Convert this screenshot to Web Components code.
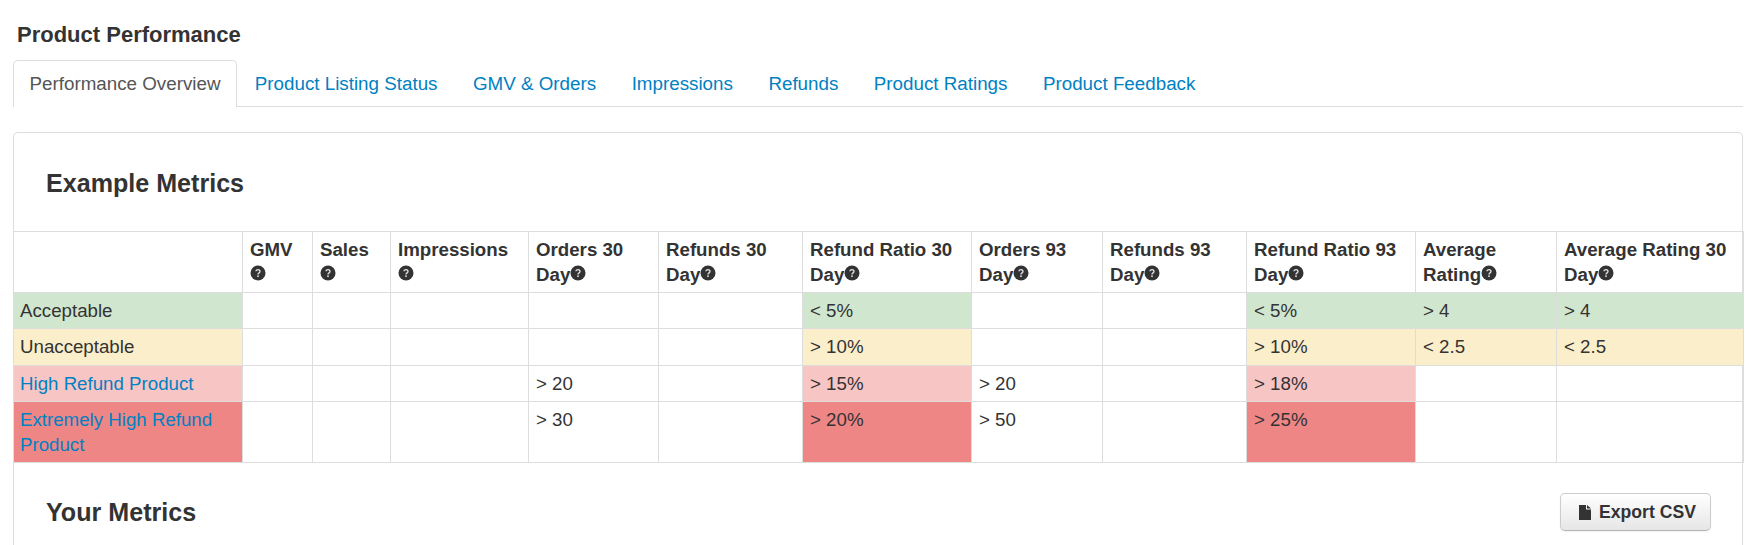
<!DOCTYPE html>
<html>
<head>
<meta charset="utf-8">
<title>Product Performance</title>
<style>
  html, body { margin: 0; background: #fff; }
  body { font-family: "Liberation Sans", Arial, sans-serif; font-size: 18.7px; color: #333; overflow: hidden; height: 545px; }
</style>
</head>
<body>
<performance-page>
  <page-tabs>
    <page-tab active>Performance Overview</page-tab>
    <page-tab>Product Listing Status</page-tab>
    <page-tab>GMV &amp; Orders</page-tab>
    <page-tab>Impressions</page-tab>
    <page-tab>Refunds</page-tab>
    <page-tab>Product Ratings</page-tab>
    <page-tab>Product Feedback</page-tab>
  </page-tabs>
  <metrics-panel>
    <section-head>Example Metrics</section-head>
    <metrics-table></metrics-table>
    <section-head compact>Your Metrics<export-button slot="action">Export CSV</export-button></section-head>
  </metrics-panel>
</performance-page>

<script>
class PerformancePage extends HTMLElement {
  connectedCallback() {
    this.attachShadow({ mode: 'open' });
    this.shadowRoot.innerHTML = `
      <style>
        :host { display: block; padding: 0 13px 0 13px; }
        h1 { margin: 0; padding: 23px 0 0 4px; height: 37px; font-size: 22px; line-height: 24px; font-weight: bold; color: #333; }
      </style>
      <h1>Product Performance</h1>
      <slot></slot>
    `;
  }
}

class PageTabs extends HTMLElement {
  connectedCallback() {
    this.attachShadow({ mode: 'open' });
    this.shadowRoot.innerHTML = `
      <style>
        :host { display: flex; height: 46px; border-bottom: 1px solid #ddd; margin-bottom: 25px; box-sizing: content-box; }
      </style>
      <slot></slot>
    `;
  }
}

class PageTab extends HTMLElement {
  connectedCallback() {
    this.attachShadow({ mode: 'open' });
    this.shadowRoot.innerHTML = `
      <style>
        :host { display: block; height: 47px; box-sizing: border-box; padding: 0 16.75px; line-height: 45px; font-size: 18.8px; color: #0081c2; white-space: nowrap; border: 1px solid transparent; border-bottom: 0; }
        :host([active]) { color: #555; background: #fff; border-color: #ddd; border-radius: 5px 5px 0 0; padding: 0 15.5px; }
      </style>
      <slot></slot>
    `;
  }
}

class MetricsPanel extends HTMLElement {
  connectedCallback() {
    this.attachShadow({ mode: 'open' });
    this.shadowRoot.innerHTML = `
      <style>
        :host { display: block; border: 1px solid #ddd; border-bottom: 0; border-radius: 5px 5px 0 0; height: 420px; }
      </style>
      <slot></slot>
    `;
  }
}

class SectionHead extends HTMLElement {
  connectedCallback() {
    this.attachShadow({ mode: 'open' });
    this.shadowRoot.innerHTML = `
      <style>
        :host { display: flex; align-items: center; justify-content: space-between; height: 98px; padding: 2px 31px 0 32px; box-sizing: border-box; font-size: 25.1px; font-weight: bold; color: #333; }
        :host([compact]) { height: 68px; padding: 30px 31px 0 32px; align-items: flex-start; line-height: 38px; }
      </style>
      <span><slot></slot></span>
      <slot name="action"></slot>
    `;
  }
}

class HelpIcon extends HTMLElement {
  connectedCallback() {
    this.attachShadow({ mode: 'open' });
    this.shadowRoot.innerHTML = `
      <style>
        :host { display: inline-block; width: 16px; height: 16px; vertical-align: 0; }
        svg { display: block; }
      </style>
      <svg width="16" height="16" viewBox="0 0 16 16">
        <circle cx="8" cy="8" r="7.5" fill="#333"/>
        <path d="M6 6.3a2 1.8 0 1 1 3.1 1.6c-.7.5-1.1.8-1.1 1.5" fill="none" stroke="#ddd" stroke-width="1.4"/>
        <rect x="7.2" y="10.4" width="1.6" height="1.6" fill="#ddd"/>
      </svg>
    `;
  }
}

class ExportButton extends HTMLElement {
  connectedCallback() {
    this.attachShadow({ mode: 'open' });
    this.shadowRoot.innerHTML = `
      <style>
        :host { display: inline-flex; align-items: center; justify-content: center; gap: 8px; width: 151px; height: 38px; padding-left: 4px; box-sizing: border-box; font-size: 17.6px; font-weight: bold; color: #333; background: linear-gradient(#fff, #e6e6e6); border: 1px solid #ccc; border-bottom-color: #b3b3b3; border-radius: 5px; box-shadow: inset 0 1px 0 rgba(255,255,255,.2), 0 1px 2px rgba(0,0,0,.05); line-height: 24px; }
        svg { display: block; }
      </style>
      <svg width="12" height="15" viewBox="0 0 12 15"><path d="M0 0h7v4.5h5V15H0z M8 0l4 3.6H8z" fill="#333"/></svg>
      <slot></slot>
    `;
  }
}

const COLUMNS = [
  ['', 229, false],
  ['GMV', 70, true],
  ['Sales', 78, true],
  ['Impressions', 138, true],
  ['Orders 30 Day', 130, false, true],
  ['Refunds 30 Day', 144, false, true],
  ['Refund Ratio 30 Day', 169, false, true],
  ['Orders 93 Day', 131, false, true],
  ['Refunds 93 Day', 144, false, true],
  ['Refund Ratio 93 Day', 169, false, true],
  ['Average Rating', 141, false, true],
  ['Average Rating 30 Day', 187, false, true],
];

const ROWS = [
  { name: 'Acceptable', tone: 'ok', h: 36, values: { 6: '< 5%', 9: '< 5%', 10: '> 4', 11: '> 4' } },
  { name: 'Unacceptable', tone: 'warn', h: 37, values: { 6: '> 10%', 9: '> 10%', 10: '< 2.5', 11: '< 2.5' } },
  { name: 'High Refund Product', tone: 'high', h: 36, link: true, values: { 4: '> 20', 6: '> 15%', 7: '> 20', 9: '> 18%' } },
  { name: 'Extremely High Refund Product', tone: 'max', h: 61, link: true, values: { 4: '> 30', 6: '> 20%', 7: '> 50', 9: '> 25%' } },
];

const TINTED = [6, 9, 10, 11];

function esc(s) {
  return s.replace(/&/g, '&amp;').replace(/</g, '&lt;').replace(/>/g, '&gt;');
}

class MetricsTable extends HTMLElement {
  connectedCallback() {
    this.attachShadow({ mode: 'open' });
    const cols = COLUMNS.map(c => `<col style="width:${c[1]}px">`).join('');
    const head = COLUMNS.map(c => {
      if (!c[0]) return '<th></th>';
      if (c[2]) return `<th>${c[0]}<br><help-icon></help-icon></th>`;
      // keep the icon glued to the last word
      const words = c[0].split(' ');
      const last = words.pop();
      return `<th>${words.join(' ')} <span class="nb">${last}<help-icon></help-icon></span></th>`;
    }).join('');
    const body = ROWS.map(r => {
      const cells = COLUMNS.slice(1).map((c, i) => {
        const idx = i + 1;
        const v = r.values[idx];
        const tint = v && TINTED.includes(idx) ? ` class="${r.tone}"` : '';
        return `<td${tint}>${v ? esc(v) : ''}</td>`;
      }).join('');
      const name = r.link ? `<a href="#">${r.name}</a>` : r.name;
      return `<tr style="height:${r.h}px"><td class="${r.tone} first">${name}</td>${cells}</tr>`;
    }).join('');
    this.shadowRoot.innerHTML = `
      <style>
        :host { display: block; margin: 0 -1px; }
        table { table-layout: fixed; border-collapse: collapse; width: 1730px; font-size: 18.7px; line-height: 24.5px; color: #333; }
        th, td { border: 1px solid #ddd; padding: 6px 7px 4px; text-align: left; vertical-align: top; }
        th { font-weight: bold; }
        td.first { padding-left: 6px; }
        .nb { white-space: nowrap; }
        a { color: #0081c2; text-decoration: none; }
        .ok { background: #d1e6cf; }
        .warn { background: #fbeeca; }
        .high { background: #f8c5c5; }
        .max { background: #ee8686; }
      </style>
      <table>
        <colgroup>${cols}</colgroup>
        <thead><tr style="height:61px">${head}</tr></thead>
        <tbody>${body}</tbody>
      </table>
    `;
  }
}

customElements.define('performance-page', PerformancePage);
customElements.define('page-tabs', PageTabs);
customElements.define('page-tab', PageTab);
customElements.define('metrics-panel', MetricsPanel);
customElements.define('section-head', SectionHead);
customElements.define('help-icon', HelpIcon);
customElements.define('export-button', ExportButton);
customElements.define('metrics-table', MetricsTable);
</script>
</body>
</html>
